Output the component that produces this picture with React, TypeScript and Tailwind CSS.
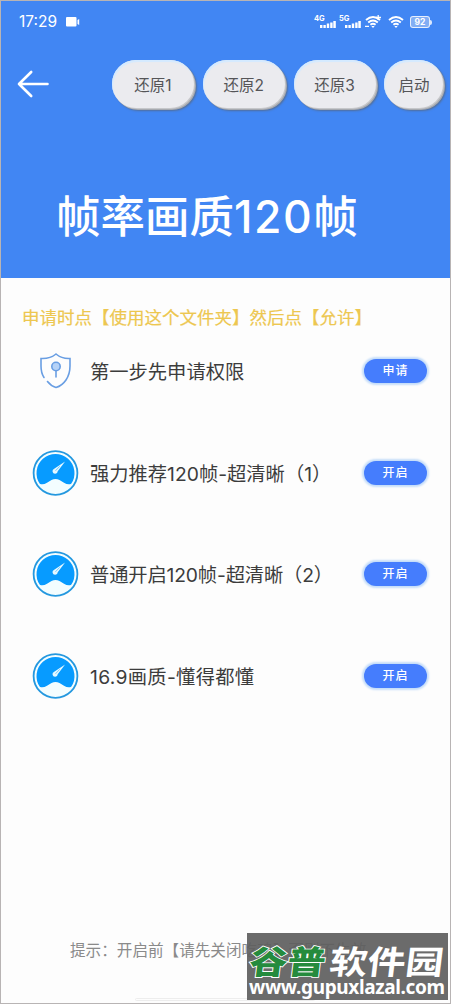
import { clsx } from 'clsx'

const restoreButtons = [
  { label: '还原1', width: 'w-[82px]' },
  { label: '还原2', width: 'w-[82px]' },
  { label: '还原3', width: 'w-[82px]' },
  { label: '启动', width: 'w-[59px]' },
]

const rows = [
  { icon: 'shield', title: '第一步先申请权限', action: '申请', spacing: '' },
  { icon: 'gauge', title: '强力推荐120帧-超清晰（1）', action: '开启', spacing: '' },
  { icon: 'gauge', title: '普通开启120帧-超清晰（2）', action: '开启', spacing: 'tracking-[-0.15px]' },
  { icon: 'gauge', title: '16.9画质-懂得都懂', action: '开启', spacing: 'tracking-[0.3px]' },
]

function Signal({ label }: { label: string }) {
  return (
    <div className="relative h-[14px] w-[21px]">
      <span className="absolute -left-px top-0 text-[7.5px] font-bold leading-[8px]">{label}</span>
      <svg className="absolute bottom-px right-0" width="16" height="8" viewBox="0 0 16 8" fill="currentColor">
        <path d="M0 5h2.4v3H0zM3.4 5h2.4v3H3.4zM6.8 3.6h2.4V8H6.8zM10.2 2.4h2.4V8h-2.4zM13.3 1h2.5v7h-2.5z" />
      </svg>
    </div>
  )
}

function Wifi({ boosted = false }: { boosted?: boolean }) {
  return (
    <svg width="16" height="14" viewBox="0 0 16 14" fill="none" stroke="currentColor" strokeWidth="1.9">
      <path d="M1 5Q8-1 15 5" />
      <path d="M3.2 7.4Q8 3.4 12.8 7.4" />
      <path d="M5.4 9.7Q8 7.6 10.6 9.7" />
      <path d="M6.3 11h3.4L8 13z" fill="currentColor" stroke="none" />
      {boosted && <path d="M13.2 0v5M11 2.5h5M0 11.3h4" strokeWidth="1.3" />}
    </svg>
  )
}

function StatusBar() {
  return (
    <div className="flex h-[42px] items-center justify-between pl-[18px] pr-[18px] text-white">
      <div className="flex items-center gap-[9px]">
        <span className="text-[15.5px] leading-none">17:29</span>
        <svg width="14" height="10" viewBox="0 0 14 10" fill="currentColor">
          <rect width="10.5" height="9.5" rx="1" />
          <path d="M11.5 3l1.7-1v6l-1.7-1z" />
        </svg>
      </div>
      <div className="flex items-center">
        <Signal label="4G" />
        <div className="w-[4px]" />
        <Signal label="5G" />
        <div className="w-[4px]" />
        <Wifi boosted />
        <div className="w-[7px]" />
        <Wifi />
        <div className="ml-[6px] flex items-center">
          <div className="flex h-[12px] w-[20px] items-center justify-center rounded-[3px] border border-white/80 bg-[#82aef4] text-[8.5px] font-bold leading-none">
            92
          </div>
          <div className="h-[5px] w-[2px] rounded-r-full bg-white/80" />
        </div>
      </div>
    </div>
  )
}

function ShieldIcon() {
  return (
    <svg width="46" height="46" viewBox="0 0 46 46" fill="none" stroke="#699ee3" strokeWidth="1.6" strokeLinecap="round">
      <path d="M12 29.5Q9 25 9 18V10.5Q18 11 24 6Q30 11 38 10.5V18C38 29 32 37 24 39.5Q19 38 15.5 33.5" />
      <circle cx="24" cy="18.5" r="4.2" fill="#b5d2f7" />
      <path d="M24 23v6" />
    </svg>
  )
}

function GaugeIcon() {
  return (
    <svg className="overflow-visible" width="46" height="46" viewBox="0 0 46 46" fill="none">
      <circle cx="23.5" cy="23" r="21.9" fill="#f3fdff" stroke="#2498df" strokeWidth="1.8" />
      <path d="M7.8 33.8A19 19 0 1 1 39.2 33.8Q36 35.2 32 32.7L27.5 30Q23.5 28 19.5 30L15 32.7Q11 35.2 7.8 33.8Z" fill="#079bff" />
      <path d="M33.1 11.5L25.7 21.3A2.6 2.6 0 1 1 22.2 18.8Z" fill="#e5f8ff" />
      <path d="M23.5 20.8l4.2-4.5" stroke="#5cbcfa" strokeWidth=".8" />
    </svg>
  )
}

function Watermark() {
  return (
    <div className="absolute bottom-[3px] right-[2px] h-[67px] w-[201px] bg-[#5e5e5e]/92 font-['Noto_Sans_CJK_SC',sans-serif]">
      <div className="absolute left-[3px] top-[8px] flex h-[38px] scale-y-[0.86] items-center whitespace-nowrap text-[38px] font-black leading-none text-white">
        <span className="-skew-x-6 text-[#258b3d] [-webkit-text-stroke:2px_white] [paint-order:stroke_fill]">谷普</span>
        <span className="ml-[4px] -skew-x-6 font-bold">软件园</span>
      </div>
      <p className="absolute left-[2px] top-[41px] whitespace-nowrap font-['Noto_Sans',sans-serif] text-[19px] font-bold leading-[26px] tracking-[-0.35px] text-white">
        www.gupuxlazal.com
      </p>
    </div>
  )
}

export default function App() {
  return (
    <div className="relative flex h-[1004px] w-[451px] flex-col overflow-hidden border border-[#b8b4b4] bg-[#fdfdfd] font-[Inter,'Noto_Sans_CJK_SC',sans-serif]">
      <header className="-mt-px h-[278px] shrink-0 border-t border-[#9fbce9] bg-[#4186f3]">
        <StatusBar />
        <div className="mt-[15px] flex h-[52px] items-center">
          <svg className="ml-[16px] mr-[63px] shrink-0" width="32" height="28" viewBox="0 0 32 28" fill="none" stroke="white" strokeWidth="2.6" strokeLinecap="round" strokeLinejoin="round">
            <path d="M30.5 14H2M14.2 2L2 14l12.2 12" />
          </svg>
          <div className="flex gap-[8.8px]">
            {restoreButtons.map((button) => (
              <button
                key={button.label}
                className={clsx(
                  'h-[48px] shrink-0 rounded-full bg-[#ebebef] pt-[3px] text-[15.5px] text-[#555558] shadow-[1px_1px_0_#c6c7ca,2px_2px_0_#a7aab0,3px_3px_2px_#526f9b,inset_1px_2px_1px_#d4eaff]',
                  button.width
                )}
              >
                {button.label}
              </button>
            ))}
          </div>
        </div>
        <h1 className="ml-[55px] mt-[77px] whitespace-nowrap text-[44.5px] font-medium leading-[60px] text-white">
          帧率画质<span className="tracking-[1.5px]">120</span>帧
        </h1>
      </header>

      <main className="flex-1">
        <p className="ml-[21px] mt-[30px] h-[20px] whitespace-nowrap text-[17.5px] leading-[20px] text-[#edc750] [-webkit-text-stroke:0.2px_#edc750]">
          申请时点【使用这个文件夹】然后点【允许】
        </p>
        <div className="mt-[20px] flex flex-col gap-[55.6px]">
          {rows.map((row) => (
            <div key={row.title} className="flex h-[46px] items-center pl-[31px] pr-[23px]">
              {row.icon === 'shield' ? <ShieldIcon /> : <GaugeIcon />}
              <span className={clsx('ml-[12px] whitespace-nowrap pt-[2px] text-[19.3px] leading-[28px] text-[#3c3c3c]', row.spacing)}>
                {row.title}
              </span>
              <button className="ml-auto h-[24px] w-[63px] shrink-0 rounded-full bg-[#457dfd] text-[12px] font-medium tracking-[1px] text-white shadow-[0_0_2px_2px_#c5ddf9]">
                {row.action}
              </button>
            </div>
          ))}
        </div>
      </main>

      <footer className="h-[64px] shrink-0 pl-[69px]">
        <p className="whitespace-nowrap text-[15.6px] leading-[24px] text-[#8a8a8a]">提示：开启前【请先关闭吃鸡】否则不生效</p>
        <div className="ml-[65px] mt-[35px] h-[3px] w-[180px] rounded-full border border-[#ededed]" />
      </footer>
      <Watermark />
    </div>
  )
}
